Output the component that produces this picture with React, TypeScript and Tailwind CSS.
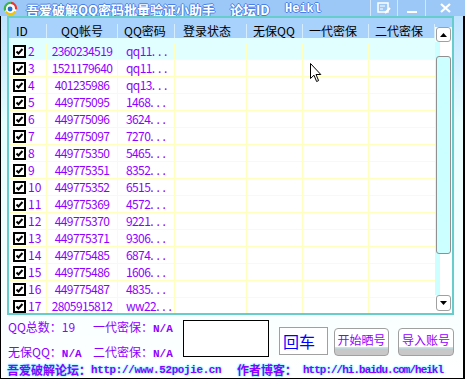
import React from 'react';

const rows = [
  ['2', '2360234519', 'qq11'],
  ['3', '1521179640', 'qq11'],
  ['4', '401235986', 'qq13'],
  ['5', '449775095', '1468'],
  ['6', '449775096', '3624'],
  ['7', '449775097', '7270'],
  ['8', '449775350', '5465'],
  ['9', '449775351', '8352'],
  ['10', '449775352', '6515'],
  ['11', '449775369', '4572'],
  ['12', '449775370', '9221'],
  ['13', '449775371', '9306'],
  ['14', '449775485', '6874'],
  ['15', '449775486', '1606'],
  ['16', '449775487', '4835'],
  ['17', '2805915812', 'ww22'],
];

const Check = () => (
  <svg width="13" height="13" viewBox="0 0 13 13" className="shrink-0">
    <rect x="1" y="1" width="11" height="11" fill="#fff" stroke="#000" strokeWidth="2" />
    <path d="M3.5 6.5 L5.5 8.5 L9.5 4" fill="none" stroke="#000" strokeWidth="2" />
  </svg>
);

const Logo = () => (
  <svg width="15" height="15" viewBox="0 0 16 16">
    <circle cx="8" cy="8" r="6.5" fill="#fff" />
    <circle cx="8" cy="8" r="6" fill="none" stroke="#3bb34a" strokeWidth="2.4" strokeDasharray="12 26" strokeDashoffset="-16" />
    <circle cx="8" cy="8" r="6" fill="none" stroke="#e8352e" strokeWidth="2.4" strokeDasharray="11 27" strokeDashoffset="-28" />
    <circle cx="8" cy="8" r="6" fill="none" stroke="#f5c400" strokeWidth="2.4" strokeDasharray="12 26" strokeDashoffset="-3" />
    <circle cx="7.5" cy="8.5" r="2.6" fill="#1e6fd0" />
  </svg>
);

const outline = '[text-shadow:-1px_0_#4a7fe8,1px_0_#4a7fe8,0_-1px_#4a7fe8,0_1px_#4a7fe8]';

const TitleBar = () => (
  <div className="h-[16px] bg-[#9cc8f8] flex items-center">
    <div className="w-[26px] pl-[3px] flex items-center">
      <Logo />
    </div>
    <span className={`mt-[2px] w-[204px] text-white font-bold text-[13px] leading-none ${outline}`}>
      吾爱破解QQ密码批量验证小助手
    </span>
    <span className={`mt-[2px] w-[55px] text-white font-bold text-[13px] leading-none ${outline}`}>
      论坛ID
    </span>
    <span className={`mt-[2px] w-[85px] text-white font-bold text-[12px] leading-none font-['Liberation_Mono',monospace] ${outline}`}>
      Heikl
    </span>
    <div className="flex h-full">
      <div className="w-[27px] h-full border-l border-[#d4e6fb] flex items-center justify-center">
        <svg width="14" height="12" viewBox="0 0 14 12">
          <rect x="1" y="1" width="10" height="9" fill="none" stroke="#fff" strokeWidth="1.5" />
          <path d="M3 4 H8 M3 7 H6" stroke="#fff" strokeWidth="1.2" />
          <path d="M8 11 L13 6" stroke="#fff" strokeWidth="2" />
        </svg>
      </div>
      <div className="w-[28px] h-full border-l border-[#d4e6fb] flex items-end justify-center pb-[3px]">
        <div className="w-[10px] h-[2px] bg-white" />
      </div>
      <div className="w-[39px] h-full border-l border-[#d4e6fb] flex items-center justify-center">
        <svg width="11" height="10" viewBox="0 0 11 10">
          <path d="M1 1 L10 9 M10 1 L1 9" stroke="#fff" strokeWidth="2.2" />
        </svg>
      </div>
    </div>
  </div>
);

const widths = ['w-[38px]', 'w-[71px]', 'w-[57px]', 'w-[72px]', 'w-[56px]', 'w-[66px]', 'w-[66px]'];
const heads = ['ID', 'QQ帐号', 'QQ密码', '登录状态', '无保QQ', '一代密保', '二代密保'];

const ListBox = () => (
  <div className="ml-[6px] w-[447px] h-[299px] border-2 border-[#66cccc] flex overflow-hidden bg-white">
    <div className="w-[426px] flex flex-col">
      <div className="h-[25px] bg-[#a8d2fb] flex flex-col">
        <div className="h-[6px]" />
        <div className="h-[14px] flex">
          {heads.map((h, i) => (
            <div
              key={h}
              className={`${widths[i]} h-full border-r border-[#d6ecff] leading-[14px] text-black ${
                i === 0 ? 'pl-[7px]' : i === 1 ? 'text-center' : i === 3 ? 'pl-[8px]' : 'pl-[6px]'
              }`}
            >
              {h}
            </div>
          ))}
        </div>
        <div className="h-[5px] bg-[#e2ffff]" />
      </div>
      {rows.map(([id, qq, pw], r) => (
        <div key={id} className={`h-[17px] shrink-0 flex border-b border-[#ffffc0] text-[#9000ff] ${r === 0 ? 'bg-[#e2ffff]' : ''}`}>
          <div className="w-[38px] border-r border-[#ffffc0] flex items-center pl-[4px] gap-[2px]">
            <Check />
            <span className="leading-none">{id}</span>
          </div>
          <div className="w-[71px] border-r border-[#ffffc0] flex items-center justify-center tracking-[-0.6px]">
            {qq}
          </div>
          <div className="w-[57px] border-r border-[#ffffc0] flex items-center pl-[8px]">
            <span className="tracking-[-0.6px]">{pw}</span>
            <span className="tracking-[2.8px]">...</span>
          </div>
          <div className="w-[72px] border-r border-[#ffffc0]" />
          <div className="w-[56px] border-r border-[#ffffc0]" />
          <div className="w-[66px] border-r border-[#ffffc0]" />
          <div className="w-[66px]" />
        </div>
      ))}
    </div>
    <div className="w-[17px] flex flex-col bg-white">
      <div className="h-[9px] shrink-0 bg-[#a8d2fb]" />
      <div className="h-[15px] shrink-0 mx-[1px] rounded-[3px] border border-[#a0a0a0] bg-white flex items-center justify-center">
        <svg width="7" height="4" viewBox="0 0 7 4"><path d="M0 4 L3.5 0 L7 4 Z" fill="#000" /></svg>
      </div>
      <div className="flex-1 flex flex-col bg-[linear-gradient(to_right,#ccffff_0_5px,#ffffff_5px)]">
        <div className="h-[14px] shrink-0" />
        <div className="h-[198px] shrink-0 mx-[1px] rounded-[3px] border border-[#909090] bg-[#ccffff]" />
        <div className="flex-1" />
      </div>
      <div className="h-[16px] shrink-0 mx-[1px] rounded-[3px] border border-[#a0a0a0] bg-white flex items-center justify-center">
        <svg width="7" height="4" viewBox="0 0 7 4"><path d="M0 0 L3.5 4 L7 0 Z" fill="#000" /></svg>
      </div>
      <div className="h-[2px] shrink-0" />
    </div>
  </div>
);

const glow = '[text-shadow:0_0_2px_#70ffff,0_0_2px_#70ffff,0_0_1px_#70ffff]';
const btn =
  'mt-[13px] h-[28px] rounded-[4px] border border-[#a0a0a0] bg-[linear-gradient(to_bottom,#ffffff_0,#ffffff_68%,#b8f0f8_70%,#c8c8c8_78%,#c8c8c8_100%)] text-[#9000ff] text-[12px] pb-[4px]';

export default function App() {
  return (
    <div className="w-[465px] h-[379px] overflow-hidden relative bg-white font-['Noto_Sans_CJK_SC','Liberation_Sans',sans-serif] text-[12px] leading-none">
      <TitleBar />
      <div className="h-[363px] border-l border-r-2 border-b border-black bg-gradient-to-b from-[#bfe4ff] via-[#e6ffff] via-30% to-white flex flex-col">
        <ListBox />
        <div className="h-[47px] flex items-start text-[#9000ff]">
          <div className="ml-[7px] mt-[6px] w-[175px] grid grid-cols-[85px_90px] gap-y-[11px] leading-[12px]">
            <span>QQ总数：19</span>
            <span>一代密保：<b className="font-['Liberation_Mono',monospace] text-[11px]">N/A</b></span>
            <span>无保QQ：<b className="font-['Liberation_Mono',monospace] text-[11px]">N/A</b></span>
            <span>二代密保：<b className="font-['Liberation_Mono',monospace] text-[11px]">N/A</b></span>
          </div>
          <div className="mt-[5px] w-[86px] h-[37px] border border-black bg-white" />
          <div className="ml-[10px] mt-[12px] w-[49px] h-[28px] border border-[#a0a0a0] bg-white flex items-center pl-[3px] text-[16px] text-[#0000ff]">
            回车
          </div>
          <button className={`ml-[6px] w-[55px] ${btn}`}>开始晒号</button>
          <button className={`ml-[9px] w-[56px] ${btn}`}>导入账号</button>
        </div>
        <div className={`h-[16px] flex items-center text-[#9000ff] font-bold ${glow}`}>
          <div className="ml-[6px] w-[230px] flex items-center">
            <span>吾爱破解论坛：</span>
            <span className="font-['Liberation_Mono',monospace] text-[11px] tracking-[-0.4px]">http://www.52pojie.cn</span>
          </div>
          <span>作者博客：</span>
          <span className="ml-[6px] font-['Liberation_Mono',monospace] text-[11px] tracking-[-1px]">http://hi.baidu.com/heikl</span>
        </div>
      </div>
      <svg className="absolute left-[310px] top-[63px]" width="12" height="20" viewBox="0 0 12 20">
        <path d="M0.5 0.5 L0.5 15.5 L4 12.2 L6.6 18.5 L8.6 17.6 L6 11.5 L10.8 11.5 Z" fill="#fff" stroke="#000" strokeWidth="1" />
      </svg>
    </div>
  );
}
